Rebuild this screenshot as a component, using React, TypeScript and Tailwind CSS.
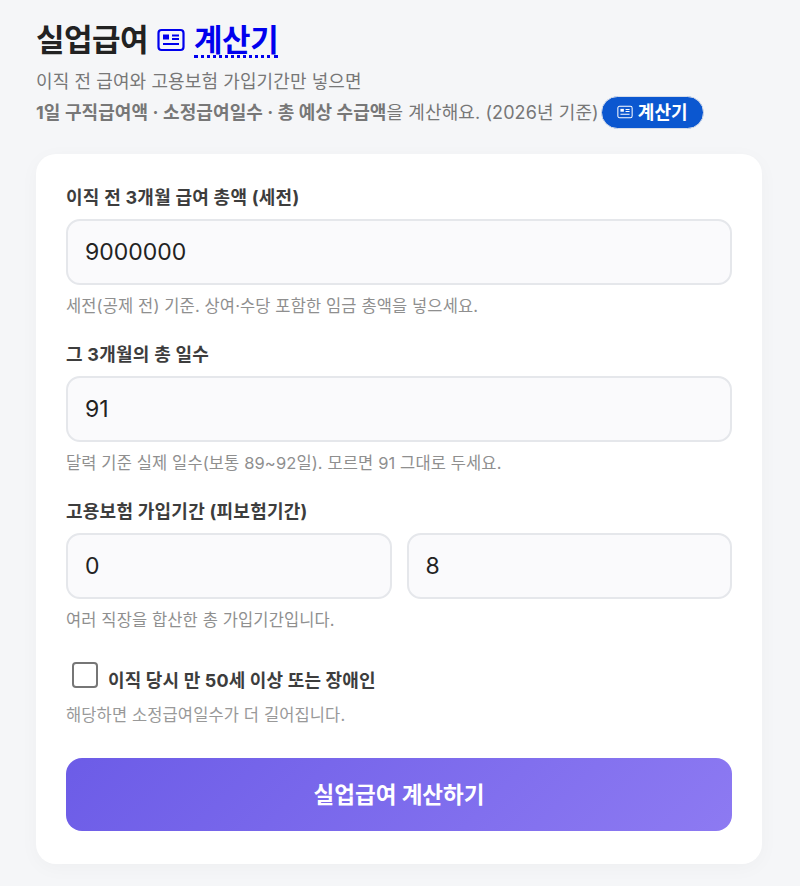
const FONT = "font-['Inter','Noto_Sans_CJK_KR',sans-serif]";
const INPUT = "block min-w-0 w-full h-[66px] rounded-[14px] border-2 border-[#e5e7eb] bg-[#fafafc] px-[17px] text-[23px] text-[#222] outline-none";

function NewsIcon({ className, sw = 2.2 }: { className: string; sw?: number }) {
  return (
    <svg viewBox="0 0 28 24" fill="none" stroke="currentColor" strokeWidth={sw} className={className}>
      <rect x="1.5" y="2" width="25" height="20" rx="3" />
      <rect x="6" y="6.5" width="6" height="5" fill="currentColor" stroke="none" />
      <path d="M15 7.5h7M15 11h7M6 16h16" />
    </svg>
  );
}

function Field({ label, value, hint }: { label: string; value: string; hint: string }) {
  return (
    <div className="mb-[25px]">
      <label className="block text-[18px] leading-[24px] font-bold text-[#3d3d3d] mb-[9px] tracking-[0.25px]">{label}</label>
      <input readOnly value={value} className={INPUT} />
      <p className="mt-[9px] text-[16.5px] leading-[24px] text-[#8f8f8f] tracking-[0.12px]">{hint}</p>
    </div>
  );
}

export default function App() {
  return (
    <div className={`${FONT} min-h-[886px] bg-[#f5f6f8] pl-[36px] pr-[38px] pt-[18px] overflow-hidden`}>
      <h1 className="flex items-center h-[44px] text-[31px] leading-[44px] font-bold tracking-[-0.5px] text-[#222]">
        실업급여
        <a href="#" className="flex items-center ml-[9px] text-[#0000ee]">
          <NewsIcon className="w-[28px] h-[24px] mr-[9px]" />
          <span className="border-b-[3px] border-dotted border-[#0000ee] leading-[33px] h-[35px]">계산기</span>
        </a>
      </h1>
      <p className="mt-[6px] text-[18px] leading-[28px] text-[#777] tracking-[0.1px]">이직 전 급여와 고용보험 가입기간만 넣으면</p>
      <p className="flex items-center h-[34px] mt-[-1px] text-[18px] text-[#777] whitespace-nowrap tracking-[0.1px]">
        <strong className="font-bold">1일 구직급여액 · 소정급여일수 · 총 예상 수급액</strong>
        을 계산해요. (2026년 기준)
        <span className="ml-[2px] inline-flex items-center h-[33px] pl-[15px] pr-[15px] rounded-full bg-[#0b57d0] border border-[#d5dcea] text-white text-[18px] font-bold">
          <NewsIcon sw={1.8} className="w-[16px] h-[14px] mr-[5px]" />
          계산기
        </span>
      </p>
      <div className="mt-[25px] h-[710px] rounded-[20px] bg-white px-[30px] pt-[32px] shadow-[0_4px_20px_rgba(0,0,0,0.03)]">
        <Field label="이직 전 3개월 급여 총액 (세전)" value="9000000" hint="세전(공제 전) 기준. 상여·수당 포함한 임금 총액을 넣으세요." />
        <Field label="그 3개월의 총 일수" value="91" hint="달력 기준 실제 일수(보통 89~92일). 모르면 91 그대로 두세요." />
        <div>
          <label className="block text-[18px] leading-[24px] font-bold text-[#3d3d3d] mb-[9px] tracking-[0.25px]">고용보험 가입기간 (피보험기간)</label>
          <div className="flex gap-[15px]">
            <input readOnly value="0" className={INPUT} />
            <input readOnly value="8" className={INPUT} />
          </div>
          <p className="mt-[9px] text-[16.5px] leading-[24px] text-[#8f8f8f] tracking-[0.12px]">여러 직장을 합산한 총 가입기간입니다.</p>
        </div>
        <div className="flex items-start mt-[30px] h-[44px]">
          <span className="ml-[6px] w-[26px] h-[26px] rounded-[4px] border-2 border-[#767676] bg-white" />
          <span className="ml-[10px] mt-[7px] text-[18px] leading-[24px] font-bold text-[#3d3d3d] tracking-[0.15px]">이직 당시 만 50세 이상 또는 장애인</span>
        </div>
        <p className="mt-[-3px] text-[16.5px] leading-[24px] text-[#999] tracking-[0.12px]">해당하면 소정급여일수가 더 길어집니다.</p>
        <button className="mt-[31px] w-full h-[73px] rounded-[16px] bg-[linear-gradient(135deg,#6c5ce7,#8d7af2)] text-white text-[22.5px] font-bold">
          실업급여 계산하기
        </button>
      </div>
    </div>
  );
}
